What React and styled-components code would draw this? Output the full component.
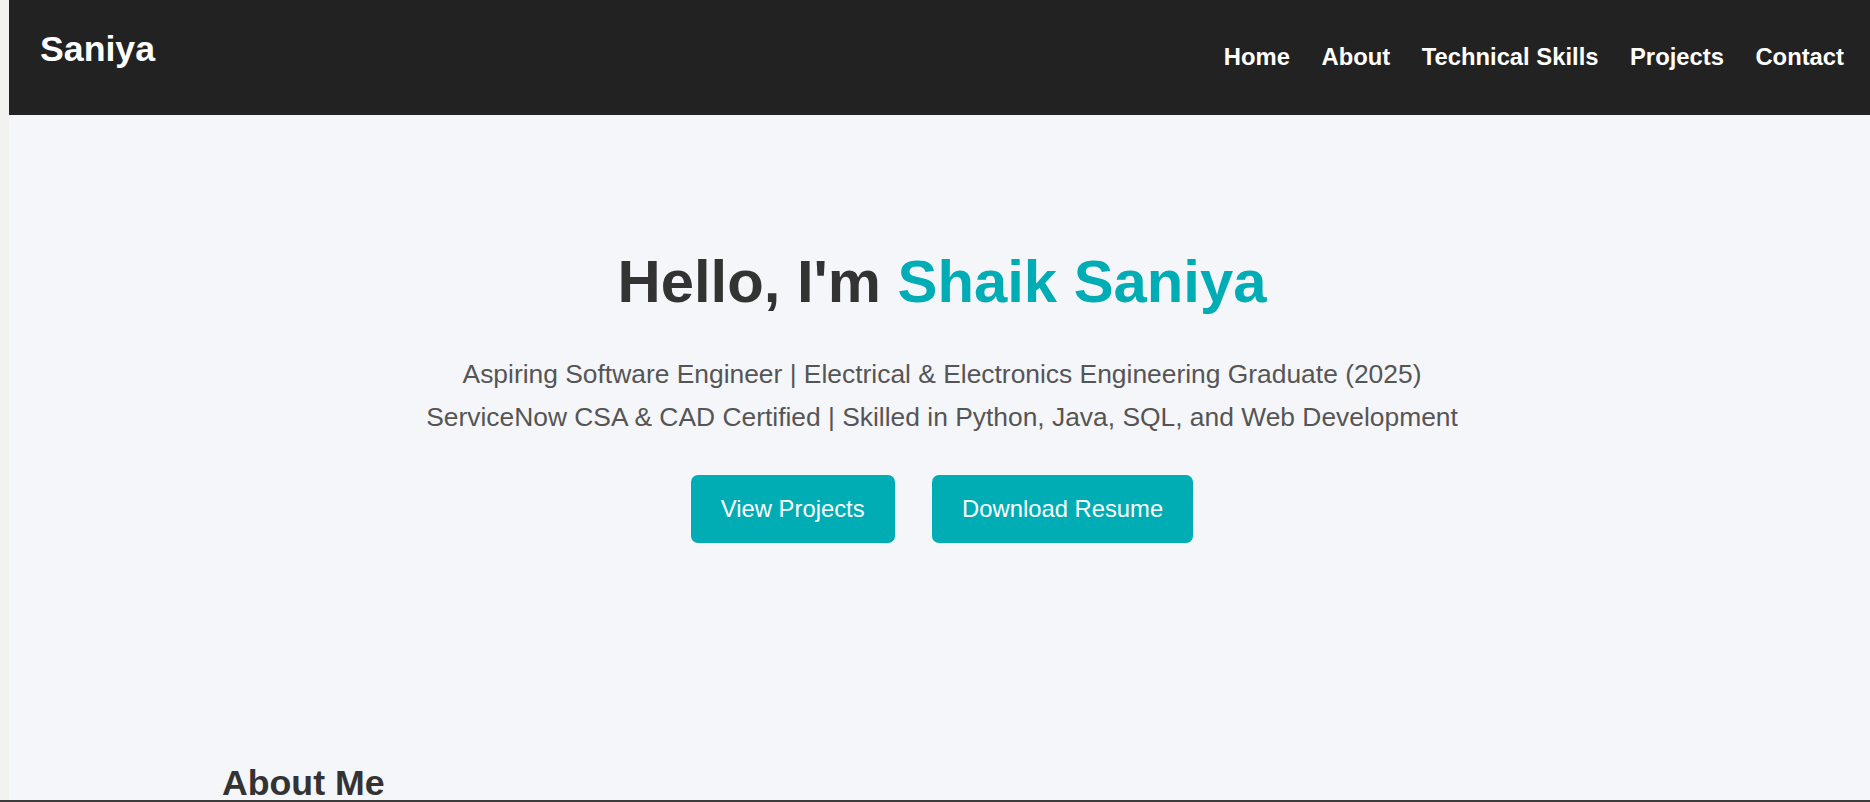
import React from "react";
import styled, { createGlobalStyle } from "styled-components";

const GlobalStyle = createGlobalStyle`
  * {
    box-sizing: border-box;
  }
  html, body {
    margin: 0;
    padding: 0;
    background: #f2f2f0;
    overflow: hidden;
    font-family: "Liberation Sans", Arial, sans-serif;
  }
`;

const navLinks = ["Home", "About", "Technical Skills", "Projects", "Contact"];

const App = () => {
  return (
    <Window>
      <GlobalStyle />
      <Page>
        <Header>
          <Logo>Saniya</Logo>
          <Nav>
            {navLinks.map((link) => (
              <NavLink key={link} href={"#" + link.toLowerCase()}>
                {link}
              </NavLink>
            ))}
          </Nav>
        </Header>

        <Hero id="home">
          <Title>
            Hello, I'm <Accent>Shaik Saniya</Accent>
          </Title>
          <Subtitle>
            Aspiring Software Engineer | Electrical &amp; Electronics
            Engineering Graduate (2025)
            <br />
            ServiceNow CSA &amp; CAD Certified | Skilled in Python, Java, SQL,
            and Web Development
          </Subtitle>
          <ButtonRow>
            <Button href="#projects">View Projects</Button>
            <Button href="#resume">Download Resume</Button>
          </ButtonRow>
        </Hero>

        <Section id="about">
          <SectionTitle>About Me</SectionTitle>
        </Section>
      </Page>
    </Window>
  );
};

const Window = styled.div`
  height: 802px;
  overflow: hidden;
  border-bottom: 2px solid #3c3c3c;
`;

const Page = styled.div`
  width: 1866px;
  margin-left: 9px;
  height: 100%;
  background: #f5f6fa;
  overflow: hidden;
`;

const Header = styled.header`
  height: 115px;
  background: #222222;
  display: flex;
  justify-content: space-between;
  align-items: flex-start;
  padding: 0 31px;
`;

const Logo = styled.div`
  margin-top: 29px;
  color: #ffffff;
  font-size: 35.7px;
  font-weight: 700;
  line-height: 41px;
`;

const Nav = styled.nav`
  margin-top: 42.5px;
  display: flex;
  gap: 31.5px;
`;

const NavLink = styled.a`
  color: #ffffff;
  text-decoration: none;
  font-size: 23.8px;
  font-weight: 700;
  line-height: 27px;
`;

const Hero = styled.section`
  padding-top: 133px;
  display: flex;
  flex-direction: column;
  align-items: center;
  text-align: center;
`;

const Title = styled.h1`
  margin: 0;
  color: #333333;
  font-size: 59.8px;
  font-weight: 700;
  line-height: 68.4px;
`;

const Accent = styled.span`
  color: #00adb5;
`;

const Subtitle = styled.p`
  margin: 37px 0 0;
  color: #555555;
  font-size: 26.4px;
  line-height: 42.3px;
`;

const ButtonRow = styled.div`
  margin-top: 37px;
  display: flex;
  gap: 37.5px;
`;

const Button = styled.a`
  display: inline-block;
  padding: 20px 30px;
  background: #00adb5;
  color: #ffffff;
  text-decoration: none;
  font-size: 23.8px;
  line-height: 27.6px;
  border-radius: 7px;
`;

const Section = styled.section`
  max-width: 1440px;
  margin: 0 auto;
  padding-top: 220px;
`;

const SectionTitle = styled.h2`
  margin: 0;
  color: #333333;
  font-size: 35.7px;
  font-weight: 700;
  line-height: 41px;
`;

export default App;
